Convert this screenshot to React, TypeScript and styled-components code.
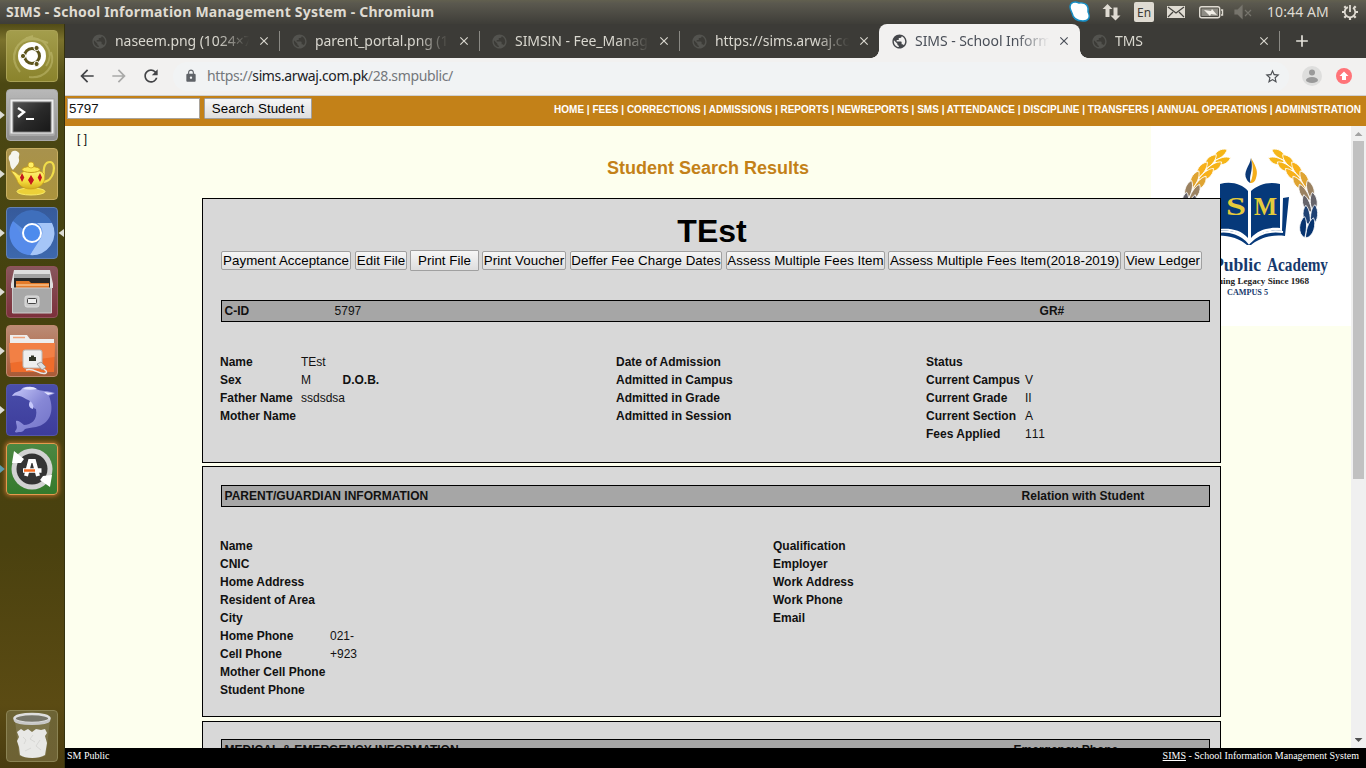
import React from "react";
import styled, { createGlobalStyle, css } from "styled-components";
import {
  MdAdd,
  MdArrowBack,
  MdArrowForward,
  MdClose,
  MdLock,
  MdPublic,
  MdRefresh,
  MdStarBorder,
} from "react-icons/md";

const GlobalStyle = createGlobalStyle`
  * { box-sizing: border-box; }
  body { margin: 0; overflow: hidden; }
`;

const ui = `"Noto Sans", "Open Sans", sans-serif`;
const arial = `"Liberation Sans", Arial, sans-serif`;

const Desktop = styled.div`
  width: 1366px;
  height: 768px;
  display: flex;
  flex-direction: column;
  overflow: hidden;
`;

/* ---------- Desktop top bar ---------- */

const SystemBar = styled.header`
  flex: none;
  height: 24px;
  display: flex;
  align-items: center;
  padding: 0 7px 0 6px;
  background: linear-gradient(#62604f 0, #5b594f 3px, #3e3d38 100%);
  color: #dfdbd2;
  font-family: ${ui};
`;

const WindowTitle = styled.div`
  flex: 1;
  font-size: 14px;
  font-weight: 700;
  line-height: 24px;
  letter-spacing: 0.21px;
  white-space: nowrap;
`;

const Tray = styled.svg`
  display: block;
  width: 190px;
  height: 24px;
`;

const Clock = styled.div`
  width: 74px;
  margin-left: 9px;
  font-size: 14px;
  line-height: 24px;
  letter-spacing: 0.1px;
  white-space: nowrap;
`;

const Gear = styled.svg`
  display: block;
  width: 18px;
  height: 18px;
`;

const Workspace = styled.div`
  flex: 1;
  min-height: 0;
  display: flex;
`;

/* ---------- Launcher ---------- */

const Launcher = styled.nav`
  flex: none;
  width: 65px;
  display: flex;
  flex-direction: column;
  justify-content: space-between;
  padding: 6px 0;
  border-right: 1px solid #35320f;
  background: linear-gradient(#514b16 0, #7b722c 16px, #4c4813 60px, #45420f 250px, #4a410f 520px, #5b4b13 680px, #493c10 100%);
`;

const LauncherGroup = styled.div`
  display: flex;
  flex-direction: column;
  gap: 7px;
`;

const LauncherItem = styled.div`
  height: 52px;
  display: flex;
  align-items: center;
`;

const Marker = styled.span<{ $on?: boolean; $flip?: boolean; $hollow?: boolean }>`
  width: 6px;
  height: 10px;
  clip-path: ${(p) => (p.$flip ? "polygon(100% 10%, 10% 50%, 100% 90%)" : "polygon(0 10%, 80% 50%, 0 90%)")};
  background: ${(p) => (p.$hollow ? "#5c9cac" : p.$on ? "#dcdcd4" : "transparent")};
`;

const Tile = styled.div<{ $from: string; $to: string; $glow?: boolean; $edge?: string }>`
  width: 52px;
  height: 52px;
  border-radius: 4px;
  overflow: hidden;
  border: 1px solid ${(p) => p.$edge || "rgba(255,255,255,.28)"};
  background: linear-gradient(${(p) => p.$from}, ${(p) => p.$to});
  ${(p) =>
    p.$glow &&
    css`
      border: 1px solid #e49a4e;
      box-shadow: 0 0 4px 1px #b7702c;
    `}
  svg {
    display: block;
    margin: -1px;
  }
`;

/* ---------- Browser chrome ---------- */

const Browser = styled.main`
  flex: 1;
  min-width: 0;
  display: flex;
  flex-direction: column;
`;

const TabStrip = styled.div`
  flex: none;
  height: 34px;
  display: flex;
  padding-left: 14px;
  background: #3c3b37;
  font-family: ${ui};
`;

const TabBox = styled.div<{ $active?: boolean; $line?: boolean }>`
  position: relative;
  width: 200px;
  height: 34px;
  display: flex;
  align-items: center;
  padding: 0 8px 0 12px;
  color: ${(p) => (p.$active ? "#4a4f58" : "#d9d7cf")};
  background: ${(p) => (p.$active ? "#f2f1f0" : "transparent")};
  border-radius: ${(p) => (p.$active ? "8px 8px 0 0" : "0")};
  ${(p) =>
    p.$line &&
    css`
      &::after {
        content: "";
        position: absolute;
        right: -1px;
        top: 7px;
        width: 1px;
        height: 20px;
        background: #8a8984;
      }
    `}
  ${(p) =>
    p.$active &&
    css`
      width: 201px;
      margin-right: -1px;
      &::before,
      &::after {
        content: "";
        position: absolute;
        bottom: 0;
        width: 8px;
        height: 8px;
      }
      &::before {
        left: -8px;
        background: radial-gradient(circle at 0 0, transparent 7.5px, #f2f1f0 8px);
      }
      &::after {
        right: -8px;
        background: radial-gradient(circle at 100% 0, transparent 7.5px, #f2f1f0 8px);
      }
    `}
`;

const FaviconBox = styled.span<{ $active?: boolean }>`
  flex: none;
  display: flex;
  width: 17px;
  height: 17px;
  color: ${(p) => (p.$active ? "#45474b" : "#53534f")};
  svg {
    width: 17px;
    height: 17px;
  }
`;

const TabTitle = styled.span`
  flex: none;
  width: 137px;
  margin-left: 7px;
  overflow: hidden;
  white-space: nowrap;
  font-size: 14px;
  line-height: 20px;
  letter-spacing: -0.06px;
  mask-image: linear-gradient(90deg, #000 74%, transparent 98%);
`;

const TabClose = styled(MdClose)`
  flex: none;
  width: 14px;
  height: 14px;
  margin-left: 5px;
`;

const NewTab = styled.div`
  width: 46px;
  display: flex;
  align-items: center;
  justify-content: center;
  color: #e4e2da;
  svg {
    width: 20px;
    height: 20px;
  }
`;

const AddressBar = styled.div`
  flex: none;
  height: 38px;
  display: flex;
  align-items: center;
  padding: 0 12px 1px;
  background: #f2f1f0;
  border-bottom: 1px solid #d0d0d0;
  color: #4a4b4d;
`;

const ToolIcon = styled.span<{ $faded?: boolean }>`
  width: 20px;
  height: 20px;
  margin-right: 12px;
  color: ${(p) => (p.$faded ? "#a9a9a8" : "#434447")};
  svg {
    display: block;
    width: 20px;
    height: 20px;
  }
`;

const Omnibox = styled.div`
  flex: 1;
  height: 29px;
  display: flex;
  align-items: center;
  padding: 0 8px 0 11px;
  border-radius: 15px;
  background: #f1f3f4;
  font-family: ${ui};
  font-size: 14px;
  letter-spacing: -0.37px;
  color: #74777b;
  b {
    font-weight: 400;
    color: #202124;
  }
`;

const LockIcon = styled(MdLock)`
  width: 14px;
  height: 14px;
  margin-right: 9px;
  color: #5f6368;
`;

const Url = styled.span`
  flex: 1;
  padding-bottom: 2px;
  white-space: nowrap;
`;

const StarIcon = styled(MdStarBorder)`
  width: 17px;
  height: 17px;
  color: #4c4f53;
`;

const Account = styled.svg`
  display: block;
  width: 56px;
  height: 22px;
  margin-left: 12px;
  margin-right: -3px;
`;

/* ---------- Web page ---------- */

const SiteBar = styled.div`
  flex: none;
  height: 30px;
  display: flex;
  align-items: flex-start;
  padding: 2px 5px 0 2px;
  background: #c38118;
`;

const SearchInput = styled.input`
  width: 133px;
  height: 21px;
  padding: 1px;
  margin: 0 4px 0 0;
  border-style: solid;
  border-width: 1px;
  border-color: #a9a39a;
  background: #fff;
  color: #111;
  font: 13.33px ${arial};
  outline: none;
`;

const NativeButton = styled.button<{ $w: number; $tall?: boolean; $gap?: number }>`
  flex: none;
  width: ${(p) => p.$w}px;
  height: ${(p) => (p.$tall ? 21 : 19)}px;
  margin: 0 ${(p) => p.$gap || 0}px 0 0;
  padding: 0;
  border: 1px solid #a0a0a0;
  border-radius: ${(p) => (p.$tall ? 1 : 2)}px;
  background: linear-gradient(#f6f6f6, #dedede);
  color: #000;
  font: 13.33px ${arial};
  line-height: 15px;
  letter-spacing: 0.03px;
  white-space: nowrap;
`;

const SiteNav = styled.nav`
  flex: 1;
  margin-top: 6px;
  text-align: right;
  color: #fff;
  font: bold 10px/12px ${arial};
  white-space: nowrap;
`;

const Viewport = styled.div`
  flex: 1;
  min-height: 0;
  display: flex;
`;

const Page = styled.div`
  position: relative;
  flex: 1;
  min-width: 0;
  overflow: hidden;
  background: #fdffee;
  font: 12px/18px ${arial};
  color: #111;
`;

const SchoolLogo = styled.svg`
  position: absolute;
  top: 0;
  right: 0;
  width: 200px;
  height: 200px;
  background: #fff;
`;

const Bracket = styled.div`
  padding: 4px 0 0 12px;
  height: 30px;
`;

const PageTitle = styled.h2`
  margin: 0;
  height: 42px;
  text-align: center;
  font-size: 18px;
  line-height: 24px;
  color: #c38118;
`;

const Panel = styled.section<{ $h: number; $gap?: number }>`
  position: relative;
  width: 1019px;
  height: ${(p) => p.$h}px;
  margin: 0 0 ${(p) => p.$gap || 0}px 137px;
  padding: 0 10px 0 17px;
  border: 1px solid #000;
  background: #d8d8d8;
`;

const StudentName = styled.h1`
  margin: 0;
  padding: 14px 6px 0 0;
  height: 51px;
  text-align: center;
  font-size: 32px;
  line-height: 37px;
  color: #000;
`;

const ButtonRow = styled.div`
  display: flex;
  align-items: center;
  height: 21px;
  margin: 0 0 29px 1px;
`;

const SectionBar = styled.div<{ $split: number; $second?: number }>`
  display: grid;
  grid-template-columns: ${(p) => (p.$second ? `${p.$second}px ${p.$split - p.$second}px 1fr` : `${p.$split}px 1fr`)};
  height: 22px;
  margin-left: 1px;
  padding: 0 2.6px;
  border: 1px solid #000;
  background: #a6a6a6;
  line-height: 20px;
`;

const BarSpacer = styled.div<{ $h: number }>`
  height: ${(p) => p.$h}px;
`;

const Columns = styled.div<{ $cols: string; $top: number }>`
  display: grid;
  grid-template-columns: ${(p) => p.$cols};
  padding-top: ${(p) => p.$top}px;
`;

const FieldRow = styled.div<{ $label: number }>`
  display: grid;
  grid-template-columns: ${(p) => p.$label}px auto 1fr;
  height: 18px;
  line-height: 18px;
  white-space: nowrap;
`;

const Value = styled.span`
  font-kerning: none;
`;

const Extra = styled.b`
  margin-left: 31.5px;
`;

const ScrollTrack = styled.div`
  flex: none;
  width: 15px;
  display: flex;
  flex-direction: column;
  align-items: center;
  justify-content: space-between;
  background: #f0f0f0;
`;

const ScrollTop = styled.div`
  display: flex;
  flex-direction: column;
  align-items: center;
`;

const Arrow = styled.span<{ $down?: boolean }>`
  width: 8px;
  height: 4px;
  margin: ${(p) => (p.$down ? "0 0 6px" : "6px 0 5px")};
  clip-path: ${(p) => (p.$down ? "polygon(0 0, 100% 0, 50% 100%)" : "polygon(50% 0, 100% 100%, 0 100%)")};
  background: ${(p) => (p.$down ? "#505050" : "#a3a3a3")};
`;

const Thumb = styled.div`
  width: 11px;
  height: 338px;
  background: #c1c1c1;
`;

const PageFooter = styled.footer`
  flex: none;
  height: 20px;
  display: flex;
  justify-content: space-between;
  padding: 0 7px 0 2px;
  background: #000;
  color: #fff;
  font: 10px/16px "Liberation Serif", "Times New Roman", serif;
`;

/* ---------- Launcher artwork ---------- */

const art = { width: 52, height: 52, viewBox: "0 0 52 52" };

const UbuntuArt = () => (
  <svg {...art}>
    <g fill="none" stroke="#d2cc87" strokeWidth="2" opacity=".4">
      <path d="M8 30C7 12 22 4 42 13M14 42C2 28 10 10 27 6M45 22c5 14-6 27-22 25M20 8c18-3 30 14 20 28" />
    </g>
    <circle cx="26" cy="26" r="14" fill="#fff" />
    <circle cx="26" cy="26" r="7.5" fill="none" stroke="#5d541c" strokeWidth="3" />
    <g fill="#5d541c" stroke="#fff" strokeWidth="1">
      <circle cx="17" cy="26" r="2.6" />
      <circle cx="30.6" cy="18" r="2.6" />
      <circle cx="30.6" cy="34" r="2.6" />
    </g>
  </svg>
);

const TerminalArt = () => (
  <svg {...art}>
    <defs>
      <linearGradient id="term" x2="1" y2="1">
        <stop stopColor="#555" />
        <stop offset=".5" stopColor="#2a2a2a" />
        <stop offset="1" stopColor="#181818" />
      </linearGradient>
    </defs>
    <rect x="3" y="9" width="46" height="38" rx="2" fill="#a9a9a9" />
    <rect x="4.5" y="10.5" width="43" height="34" fill="#eee" />
    <rect x="7" y="13" width="38" height="30" fill="url(#term)" stroke="#777" />
    <path d="M12 19l6 4-6 5" fill="none" stroke="#fff" strokeWidth="2.4" />
    <path d="M20 30h8" stroke="#fff" strokeWidth="2" />
  </svg>
);

const TeapotArt = () => (
  <svg {...art}>
    <defs>
      <linearGradient id="pot" x2="0" y2="1">
        <stop stopColor="#fff27a" />
        <stop offset=".6" stopColor="#f3dc3c" />
        <stop offset="1" stopColor="#d4ab1c" />
      </linearGradient>
    </defs>
    <path d="M7 22C3 18 5 15 3 12c-1-4 1-5 2-6 0-4 5-4 7-2 3 2 0 4 1 7 1 4-3 7-6 11z" fill="#f5f5ee" />
    <path d="M38 28c-1-9 1-14 6-14 7 0 5 20-8 20" fill="none" stroke="#f0dc4a" strokeWidth="2.2" />
    <ellipse cx="25" cy="43.5" rx="14" ry="3.5" fill="#ecd039" stroke="#f8ea68" />
    <path d="M5 23c5 0 7 5 9 4 2-6 20-7 24-1 3 7-3 15-13 15-9 0-13-5-14-9-2-4-3-5-6-9z" fill="url(#pot)" stroke="#c99c19" strokeWidth=".7" />
    <ellipse cx="25" cy="21.5" rx="9" ry="3" fill="#f8e653" stroke="#c69c1b" />
    <circle cx="25" cy="17" r="3" fill="#ffef65" stroke="#c99c19" strokeWidth=".7" />
    <path d="M16 25l2.300 4.500-2.300 4.500-2-4.500zM25 27l3 5-3 5-3-5zM34 25l2 4.500-2 4.500-2.300-4.500z" fill="#c4161d" />
  </svg>
);

const ChromiumArt = () => (
  <svg {...art}>
    <circle cx="26" cy="26" r="22" fill="#5b8fe5" />
    <path d="M7 14A22 22 0 0 1 46 16H26a10 10 0 0 0-9 6z" fill="#3f6fbc" />
    <path d="M46 16a22 22 0 0 1-22 32l11-17c3-6 1-12-4-15z" fill="#a5c5f7" />
    <path d="M7 14l10 17c3 5 9 6 14 4L24 48A22 22 0 0 1 7 14z" fill="#568bea" />
    <circle cx="26" cy="26" r="10" fill="#fff" />
    <circle cx="26" cy="26" r="8" fill="#4d8bed" />
  </svg>
);

const DrawerArt = () => (
  <svg {...art}>
    <path d="M8 4h36l3 14v4H5v-4z" fill="#dedede" />
    <path d="M8 8h36v14H8z" fill="#a2a2a2" />
    <path d="M8 12h36v12H8z" fill="#282828" />
    <path d="M10 15h13l2 2h18v6H10z" fill="#e37b2a" />
    <path d="M10 19h33" stroke="#ffe4bb" />
    <path d="M6.500 22h39v25h-39z" fill="#a8a8a8" stroke="#ccc" />
    <rect x="19" y="30" width="14" height="11" rx="2" fill="#ccc" stroke="#ddd" />
    <rect x="21.5" y="32.5" width="9" height="5" rx="1" fill="#eee" stroke="#444" />
  </svg>
);

const NetworkFolderArt = () => (
  <svg {...art}>
    <path d="M4 10h17l3 4h24v12H4z" fill="#eee" />
    <path d="M7 12.500h12" stroke="#f0a27a" strokeWidth="1.5" />
    <path d="M3 18h46l-1 29H5z" fill="#ee6c2b" />
    <path d="M3 18h46l-.5 14L4 38z" fill="#f58e57" opacity=".6" />
    <rect x="17" y="25" width="19" height="18" rx="2" fill="#eee" stroke="#b8b8b8" />
    <path d="M23 36v-4h2v-1.500h3v1.500h2v4z" fill="#303426" />
    <path d="M20 45c8-3 14 6 20 3 2-2-2-3-4-6" fill="none" stroke="#e8e8e8" strokeWidth="1.5" />
    <path d="M31 39l4-2 5 5-4 3z" fill="#ddd" stroke="#888" strokeWidth=".7" />
  </svg>
);

const DolphinArt = () => (
  <svg {...art}>
    <defs>
      <linearGradient id="dol" x2="1" y2="1">
        <stop stopColor="#c9cbfb" />
        <stop offset=".5" stopColor="#8788d6" />
        <stop offset="1" stopColor="#6f70c6" />
      </linearGradient>
    </defs>
    <path d="M6 12c2-4 6-4 9-6 2-4 8-4 13-2 4 2 6 3 13 3l8 2c-3 2-5 2-6 3 6 15 1 28-13 31-5 1-9 1-11 2-2 3-4 3-6 3-4 1-5 0-3-2 2-3 0-5 0-9 3-1 5 2 8 4 7 0 14-5 12-16-2 0-4-3-6-8-6-3-11-7-18-5z" fill="url(#dol)" />
    <path d="M24 17c3 2 4 5 3 8-4-1-5-4-3-8z" fill="#c6c8fa" />
    <path d="M17 5c4-3 10-3 14 0-5 1-9 1-14 0zM38 8l10 1-6 2z" fill="#e4e5ff" />
  </svg>
);

const UpdaterArt = () => (
  <svg {...art}>
    <circle cx="26" cy="26" r="20.5" fill="#d2d2d2" />
    <circle cx="26" cy="26" r="15.5" fill="#343434" />
    <path d="M6 20L8 8l10 8-3 4zM46 32l-2 12-10-7 3-4z" fill="#fff" />
    <path d="M20 33l4-15h4l4 15" fill="none" stroke="#fff" strokeWidth="4" />
    <path d="M17 27.500h18.500" stroke="#fff" strokeWidth="4.5" />
    <path d="M18 27.500h11" stroke="#f26a22" strokeWidth="2.4" />
  </svg>
);

const TrashArt = () => (
  <svg {...art}>
    <path d="M9 10l4 35c3 4 24 4 27 0l4-35z" fill="#c8c8b5" opacity=".18" />
    <path d="M11 22l4-3 3 2 4-2 4 3 4-3 5 1 4-1 2 4-2 3 2 7-2 12c-6 4-20 4-25 0l-1-8-2-6 2-4z" fill="#e8e8e6" />
    <path d="M17 27l3 3-2 4M27 25l-3 4 5 3M34 30l-4 6 5 4M19 41l6-3" fill="none" stroke="#d2d2cf" strokeWidth=".8" />
    <ellipse cx="26" cy="8.5" rx="17.5" ry="4.5" fill="#77766a" stroke="#dedede" strokeWidth="2.6" />
    <path d="M8.500 10c3 5 32 5 35 0" fill="none" stroke="#c8c8c8" strokeWidth="2.5" />
  </svg>
);

const launcherItems = [
  { Art: UbuntuArt, from: "#a39d4c", to: "#8a832c", edge: "#aaa255" },
  { Art: TerminalArt, from: "#b8b8b8", to: "#8e8e8e", edge: "#aaa", on: true },
  { Art: TeapotArt, from: "#a8924d", to: "#ab933c", edge: "#c7ae62", on: true },
  { Art: ChromiumArt, from: "#365a9b", to: "#3d68ad", edge: "#6381b3", on: true, focused: true },
  { Art: DrawerArt, from: "#88565c", to: "#7c303b", edge: "#92535b", on: true },
  { Art: NetworkFolderArt, from: "#bb8b75", to: "#a95a36", edge: "#c08a70", on: true },
  { Art: DolphinArt, from: "#494eaa", to: "#3d3c9b", edge: "#5556a8", on: true },
  { Art: UpdaterArt, from: "#4c8742", to: "#347a2c", glow: true, hollow: true },
];

/* ---------- School crest ---------- */

/* Stem points of the left ear with the direction of growth, tip first. */
const leaves = [
  [66, 33, -22, 13],
  [57, 41, -36, 14],
  [49, 50, -44, 15],
  [43, 60, -54, 15],
  [38, 71, -64, 16],
  [36, 83, -74, 16],
  [37, 96, -86, 17],
  [42, 109, -98, 18],
];

const leafTint = ["#f5b618", "#f5b318", "#f7b01a", "#dfa432", "#9b8261", "#66646b", "#1f4274", "#06336f"];

const Wheat = () => (
  <g stroke="#fff" strokeWidth=".8">
    {leaves.map(([x, y, a, len], i) => (
      <g key={i} transform={`translate(${x} ${y}) rotate(${a})`} fill={leafTint[i]}>
        <path d={`M-3 0C-1-8 ${len - 5}-9 ${len}-5C${len - 4} 0 2 1-3 0z`} />
        <path d={`M-3 1C0 9 ${len - 5} 9 ${len} 4C${len - 4} 0 2 0-3 1z`} />
      </g>
    ))}
  </g>
);

const Crest = () => (
  <SchoolLogo viewBox="0 0 200 200">
    <Wheat />
    <g transform="translate(197 0) scale(-1 1)">
      <Wheat />
    </g>
    <path d="M100 32c-1 8-9 14-4 22 2 3 4 3 4 3-3-7 3-11 0-25z" fill="#0c3977" />
    <path d="M100 32c6 10 7 14 5 20-1 4-3 5-6 5 3-5 4-14 1-25z" fill="#f4ae1b" />
    <path d="M62 73l5-1v33c12-2 24 2 31 12 8-10 20-14 33-12l1-33 6-1-4 39c-15-2-27 3-34 9h-4c-8-7-21-11-36-9z" fill="#06397a" />
    <path d="M69 58c11-3 22 0 28 7v47c-7-8-17-10-28-9zM100 65c7-6 17-10 29-7v44c-12-1-22 2-29 10z" fill="#06397a" />
    <path d="M66 106c13-2 25 2 32 11 8-9 20-13 34-11" fill="none" stroke="#fff" strokeWidth="2.2" />
    <g fill="#e5cb3c" fontFamily="Liberation Serif, serif" fontWeight="700" fontSize="26">
      <text x="75" y="89" textLength="20" lengthAdjust="spacingAndGlyphs">S</text>
      <text x="103" y="89" textLength="23" lengthAdjust="spacingAndGlyphs">M</text>
    </g>
    <g fontFamily="Liberation Serif, serif" fontWeight="700">
      <text x="31" y="145" fontSize="18" fill="#173a6d" textLength="79" lengthAdjust="spacingAndGlyphs">SM Public</text>
      <text x="116" y="145" fontSize="18" fill="#173a6d" textLength="61" lengthAdjust="spacingAndGlyphs">Academy</text>
      <text x="40" y="158" fontSize="9" fill="#222" textLength="118" lengthAdjust="spacingAndGlyphs">Continuing Legacy Since 1968</text>
      <text x="76" y="169" fontSize="8" fill="#173a6d" textLength="41" lengthAdjust="spacingAndGlyphs">CAMPUS 5</text>
    </g>
  </SchoolLogo>
);

/* ---------- Data ---------- */

const tabs = [
  { title: "naseem.png (1024×768)", line: true },
  { title: "parent_portal.png (1024×768)", line: true },
  { title: "SIMS!N - Fee_Management", line: true },
  { title: "https://sims.arwaj.com.pk" },
  { title: "SIMS - School Information", active: true },
  { title: "TMS", line: true },
];

const menu =
  "HOME | FEES | CORRECTIONS | ADMISSIONS | REPORTS | NEWREPORTS | SMS | ATTENDANCE | DISCIPLINE | TRANSFERS | ANNUAL OPERATIONS | ADMINISTRATION";

const actions = [
  { label: "Payment Acceptance", w: 130, gap: 4 },
  { label: "Edit File", w: 52, gap: 3 },
  { label: "Print File", w: 69, gap: 3, tall: true },
  { label: "Print Voucher", w: 84, gap: 4 },
  { label: "Deffer Fee Charge Dates", w: 152, gap: 4 },
  { label: "Assess Multiple Fees Item", w: 159, gap: 3 },
  { label: "Assess Multiple Fees Item(2018-2019)", w: 233, gap: 3 },
  { label: "View Ledger", w: 78 },
];

type FieldData = { label: string; value?: string; extra?: string };

const Fields = ({ items, label }: { items: FieldData[]; label: number }) => (
  <div>
    {items.map((f) => (
      <FieldRow key={f.label} $label={label}>
        <b>{f.label}</b>
        <Value>{f.value}</Value>
        {f.extra && <Extra>{f.extra}</Extra>}
      </FieldRow>
    ))}
  </div>
);

const named = (...labels: string[]): FieldData[] => labels.map((label) => ({ label }));

export default function App() {
  return (
    <Desktop>
      <GlobalStyle />
      <SystemBar>
        <WindowTitle>SIMS - School Information Management System - Chromium</WindowTitle>
        <Tray viewBox="0 0 190 24">
          <path d="M2 7C2 2 7 1 11 3c8-1 10 4 9 9 3 6 0 9-5 9-7 0-10-3-11-8-1-2-2-4-2-6z" fill="#fff" stroke="#168fc7" strokeWidth="1.4" />
          <path d="M39.500 4l-5 5h3v8h4V9h3zM47.500 20.500l-5-5h3v-8h4v8h3z" fill="#dfdbd2" />
          <rect x="66" y="2" width="20" height="20" rx="2" fill="#dfdbd2" />
          <text x="69" y="17" fontFamily="Noto Sans, sans-serif" fontSize="12" fill="#3d3c37" textLength="14" lengthAdjust="spacingAndGlyphs">En</text>
          <rect x="99" y="6" width="18" height="12" fill="#dfdbd2" />
          <path d="M100 7l8 6 8-6M100 17l5-5M116 17l-5-5" fill="none" stroke="#45443f" strokeWidth="1.2" />
          <rect x="131.7" y="6.7" width="20" height="11" rx="2" fill="none" stroke="#dfdbd2" strokeWidth="1.4" />
          <rect x="133.5" y="8.5" width="16.5" height="7.5" fill="#8e8c84" />
          <path d="M153 10h1.500v5H153" fill="none" stroke="#dfdbd2" strokeWidth="1.4" />
          <path d="M136 10l7 1 1-2 5 6-6-1-1 2z" fill="#f1eee6" />
          <path d="M167 10h3l4-4v12l-4-4h-3zM177 10l6 6M183 10l-6 6" fill="#77756d" stroke="#77756d" strokeWidth="1.2" />
        </Tray>
        <Clock>10:44 AM</Clock>
        <Gear viewBox="0 0 18 18" fill="none" stroke="#dfdbd2">
          <circle cx="9" cy="9" r="5.3" strokeWidth="1.8" strokeDasharray="28 5.3" strokeDashoffset="-27.5" />
          <path d="M9 2v7" strokeWidth="1.8" />
          <path d="M1 9h2.500M14.500 9H17M9 14.500V17M3.300 3.300l1.800 1.800M14.700 3.300l-1.800 1.800M3.300 14.700l1.800-1.800M14.700 14.700l-1.800-1.800" strokeWidth="2.2" />
        </Gear>
      </SystemBar>

      <Workspace>
        <Launcher>
          <LauncherGroup>
            {launcherItems.map(({ Art, from, to, edge, on, focused, glow, hollow }, i) => (
              <LauncherItem key={i}>
                <Marker $on={on} $hollow={hollow} />
                <Tile $from={from} $to={to} $edge={edge} $glow={glow}>
                  <Art />
                </Tile>
                <Marker $on={focused} $flip />
              </LauncherItem>
            ))}
          </LauncherGroup>
          <LauncherItem>
            <Marker />
            <Tile $from="#6d6435" $to="#6e6234" $edge="#8b8354">
              <TrashArt />
            </Tile>
          </LauncherItem>
        </Launcher>

        <Browser>
          <TabStrip>
            {tabs.map((t) => (
              <TabBox key={t.title} $active={t.active} $line={t.line}>
                <FaviconBox $active={t.active}>
                  <MdPublic />
                </FaviconBox>
                <TabTitle>{t.title}</TabTitle>
                <TabClose />
              </TabBox>
            ))}
            <NewTab>
              <MdAdd />
            </NewTab>
          </TabStrip>
          <AddressBar>
            <ToolIcon>
              <MdArrowBack />
            </ToolIcon>
            <ToolIcon $faded>
              <MdArrowForward />
            </ToolIcon>
            <ToolIcon>
              <MdRefresh />
            </ToolIcon>
            <Omnibox>
              <LockIcon />
              <Url>
                https://<b>sims.arwaj.com.pk</b>/28.smpublic/
              </Url>
              <StarIcon />
            </Omnibox>
            <Account viewBox="0 0 56 22">
              <circle cx="11" cy="11" r="10" fill="#dededd" />
              <circle cx="11" cy="7.5" r="3" fill="#999" />
              <ellipse cx="11" cy="15" rx="6" ry="3" fill="#999" />
              <circle cx="43" cy="11" r="8" fill="#ff7378" />
              <path d="M43 6.500l-4.500 4.500h2.500v4h4v-4h2.500z" fill="#fff" />
            </Account>
          </AddressBar>

          <SiteBar>
            <SearchInput defaultValue="5797" />
            <NativeButton $w={108} $tall>
              Search Student
            </NativeButton>
            <SiteNav>{menu}</SiteNav>
          </SiteBar>

          <Viewport>
            <Page>
              <Crest />
              <Bracket>[ ]</Bracket>
              <PageTitle>Student Search Results</PageTitle>

              <Panel $h={265} $gap={3}>
                <StudentName>TEst</StudentName>
                <ButtonRow>
                  {actions.map((a) => (
                    <NativeButton key={a.label} $w={a.w} $gap={a.gap} $tall={a.tall}>
                      {a.label}
                    </NativeButton>
                  ))}
                </ButtonRow>
                <SectionBar $second={110} $split={815}>
                  <b>C-ID</b>
                  <span>5797</span>
                  <b>GR#</b>
                </SectionBar>
                <Columns $top={31} $cols="396px 310px 1fr">
                  <Fields
                    label={81}
                    items={[
                      { label: "Name", value: "TEst" },
                      { label: "Sex", value: "M", extra: "D.O.B." },
                      { label: "Father Name", value: "ssdsdsa" },
                      { label: "Mother Name" },
                    ]}
                  />
                  <Fields
                    label={130}
                    items={named("Date of Admission", "Admitted in Campus", "Admitted in Grade", "Admitted in Session")}
                  />
                  <Fields
                    label={99}
                    items={[
                      { label: "Status" },
                      { label: "Current Campus", value: "V" },
                      { label: "Current Grade", value: "II" },
                      { label: "Current Section", value: "A" },
                      { label: "Fees Applied", value: "111" },
                    ]}
                  />
                </Columns>
              </Panel>

              <Panel $h={251} $gap={4}>
                <BarSpacer $h={18} />
                <SectionBar $split={797}>
                  <b>PARENT/GUARDIAN INFORMATION</b>
                  <b>Relation with Student</b>
                </SectionBar>
                <Columns $top={30} $cols="553px 1fr">
                  <Fields
                    label={110}
                    items={[
                      ...named("Name", "CNIC", "Home Address", "Resident of Area", "City"),
                      { label: "Home Phone", value: "021-" },
                      { label: "Cell Phone", value: "+923" },
                      ...named("Mother Cell Phone", "Student Phone"),
                    ]}
                  />
                  <Fields
                    label={110}
                    items={named("Qualification", "Employer", "Work Address", "Work Phone", "Email")}
                  />
                </Columns>
              </Panel>

              <Panel $h={200}>
                <BarSpacer $h={17} />
                <SectionBar $split={789}>
                  <b>MEDICAL &amp; EMERGENCY INFORMATION</b>
                  <b>Emergency Phone</b>
                </SectionBar>
              </Panel>
            </Page>
            <ScrollTrack>
              <ScrollTop>
                <Arrow />
                <Thumb />
              </ScrollTop>
              <Arrow $down />
            </ScrollTrack>
          </Viewport>

          <PageFooter>
            <span>SM Public</span>
            <span>
              <u>SIMS</u> - School Information Management System
            </span>
          </PageFooter>
        </Browser>
      </Workspace>
    </Desktop>
  );
}
